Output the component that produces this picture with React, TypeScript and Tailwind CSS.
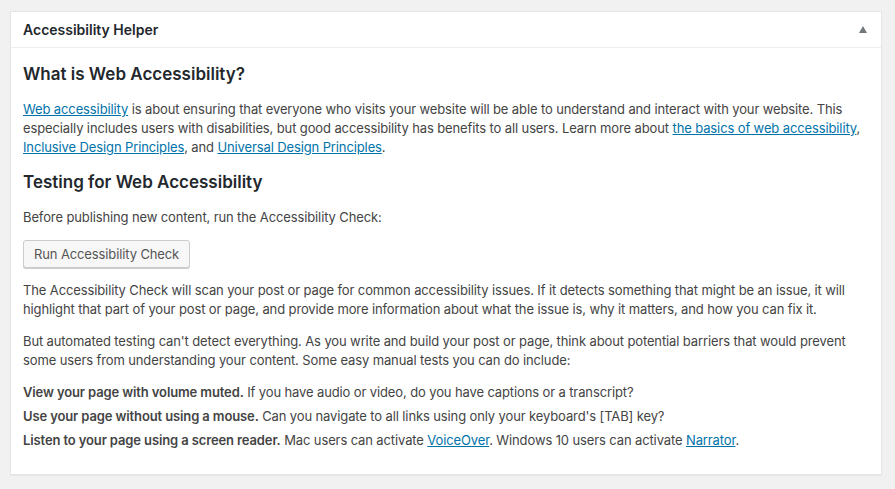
export default function App() {
  const link = "text-[#0073aa] underline";
  return (
    <div
      className="min-h-[489px] bg-[#f1f1f1] pt-[11px] pl-[10px] pr-[13px] pb-[14px] text-[13px] leading-[19px] tracking-[-0.12px] text-[#444]"
      style={{ fontFamily: "Inter, 'Noto Sans', sans-serif" }}
    >
      <div className="border border-[#e5e5e5] bg-white shadow-[0_1px_1px_rgba(0,0,0,0.04)]">
        <div className="flex h-[36px] items-center justify-between border-b border-[#eee] pl-[12px] pr-[14px]">
          <h2 className="text-[14px] font-semibold tracking-normal text-[#23282d]">Accessibility Helper</h2>
          <span className="h-0 w-0 border-x-[4px] border-b-[7px] border-x-transparent border-b-[#72777c]" />
        </div>
        <div className="px-[12px] pb-[24px] pt-[14px]">
          <h3 className="text-[17px] font-semibold leading-[24px] tracking-normal text-[#23282d]">
            What is Web Accessibility?
          </h3>
          <p className="mt-[14px]">
            <a className={link} href="#">Web accessibility</a> is about ensuring that everyone who visits your
            website will be able to understand and interact with your website. This especially includes users with
            disabilities, but good accessibility has benefits to all users. Learn more about{" "}
            <a className={link} href="#">the basics of web accessibility</a>,{" "}
            <a className={link} href="#">Inclusive Design Principles</a>, and{" "}
            <a className={link} href="#">Universal Design Principles</a>.
          </p>
          <h3 className="mt-[13px] text-[17px] font-semibold leading-[24px] tracking-normal text-[#23282d]">
            Testing for Web Accessibility
          </h3>
          <p className="mt-[14px]">Before publishing new content, run the Accessibility Check:</p>
          <button className="mt-[13px] h-[28px] rounded-[3px] border border-[#ccc] bg-[#f7f7f7] px-[10px] text-[13px] text-[#555] shadow-[0_1px_0_#ccc]">
            Run Accessibility Check
          </button>
          <p className="mt-[13px]">
            The Accessibility Check will scan your post or page for common accessibility issues. If it detects
            something that might be an issue, it will highlight that part of your post or page, and provide more
            information about what the issue is, why it matters, and how you can fix it.
          </p>
          <p className="mt-[13px]">
            But automated testing can't detect everything. As you write and build your post or page, think about
            potential barriers that would prevent some users from understanding your content. Some easy manual tests
            you can do include:
          </p>
          <p className="mt-[13px]">
            <strong className="font-semibold">View your page with volume muted.</strong> If you have audio or video,
            do you have captions or a transcript?
          </p>
          <p className="mt-[5px]">
            <strong className="font-semibold">Use your page without using a mouse.</strong> Can you navigate to all
            links using only your keyboard's [TAB] key?
          </p>
          <p className="mt-[5px]">
            <strong className="font-semibold">Listen to your page using a screen reader.</strong> Mac users can
            activate <a className={link} href="#">VoiceOver</a>. Windows 10 users can activate{" "}
            <a className={link} href="#">Narrator</a>.
          </p>
        </div>
      </div>
    </div>
  );
}
